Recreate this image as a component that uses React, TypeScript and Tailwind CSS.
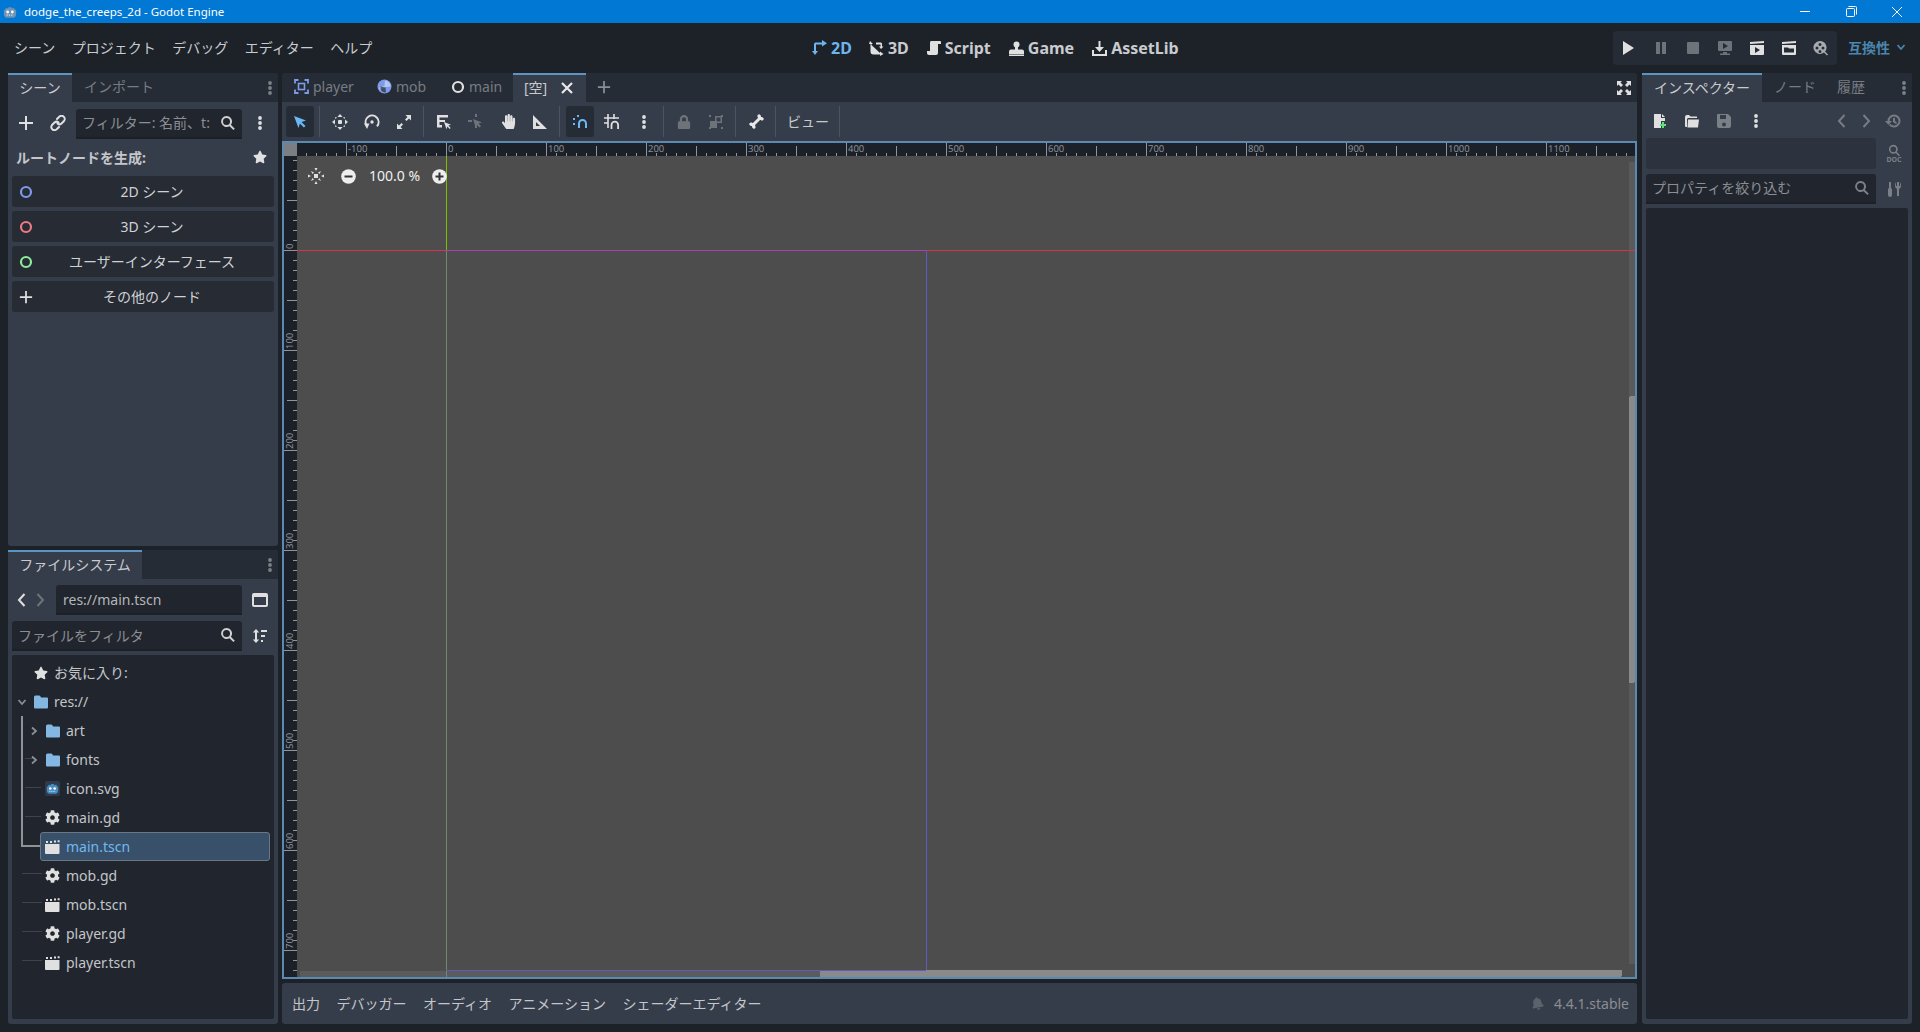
import React from "react";
import { FaCog, FaStar, FaHandPaper, FaLock, FaBone, FaBell } from "react-icons/fa";

type P = { c?: string; s?: number };
const Svg = ({ c = "#e0e0e0", s = 16, children }: P & { children: React.ReactNode }) => (
  <svg viewBox="0 0 16 16" width={s} height={s} fill={c} className="shrink-0">{children}</svg>
);
const Plus = ({ c = "#e0e0e0", s = 16 }: P) => <Svg c={c} s={s}><path d="M7 1h2v6h6v2H9v6H7V9H1V7h6z" /></Svg>;
const Dots = ({ c = "#e0e0e0" }: P) => <Svg c={c}><circle cx="8" cy="3" r="1.9" /><circle cx="8" cy="8" r="1.9" /><circle cx="8" cy="13" r="1.9" /></Svg>;
const Search = ({ c = "#e0e0e0", s = 16 }: P) => <Svg c={c} s={s}><path fillRule="evenodd" d="M6.5 1a5.5 5.5 0 0 1 4.4 8.8l3.9 3.9-1.4 1.4-3.9-3.9A5.5 5.5 0 1 1 6.5 1zm0 2a3.5 3.5 0 1 0 0 7 3.5 3.5 0 0 0 0-7z" /></Svg>;
const Link = () => <Svg><g fill="none" stroke="#e0e0e0" strokeWidth="2" strokeLinecap="round"><path d="M7 4l2-2a3 3 0 0 1 5 4l-2.5 2.5a3 3 0 0 1-4 0" /><path d="M9 12l-2 2a3 3 0 0 1-5-4l2.5-2.5a3 3 0 0 1 4 0" /></g></Svg>;
const Ring = ({ c, s = 14 }: { c: string; s?: number }) => <svg width={s} height={s} viewBox="0 0 14 14" className="shrink-0"><circle cx="7" cy="7" r="5" fill="none" stroke={c} strokeWidth="2.2" /></svg>;
const Folder = ({ s = 14 }: P) => <svg width={s} height={s} viewBox="0 0 14 13" className="shrink-0"><path fill="#84b8e3" d="M0 1.5Q0 0 1.5 0H5q1 0 1.5 1L7 2h6q1 0 1 1v9q0 1-1 1H1q-1 0-1-1z" /></svg>;
const Scene = ({ c = "#e0e0e0" }: P) => <svg width="15" height="14" viewBox="0 0 15 14" fill={c} className="shrink-0"><path d="M0 4h14.5v9a1 1 0 0 1-1 1H1a1 1 0 0 1-1-1z" /><path d="M1 1h2v2H1zM5 1h2v2H5zM9 .6h2v2H9zM12.6.3h2v2h-2z" /></svg>;
const Gear = () => <FaCog size={15} color="#e0e0e0" className="shrink-0" />;
const ChevR = ({ c = "#e0e0e0", s = 16 }: P) => <Svg c="none" s={s}><path d="M5.5 2l5.5 6-5.5 6" stroke={c} strokeWidth="2" fill="none" /></Svg>;
const ChevL = ({ c = "#e0e0e0", s = 16 }: P) => <Svg c="none" s={s}><path d="M10.5 2L5 8l5.5 6" stroke={c} strokeWidth="2" fill="none" /></Svg>;
const ChevD = ({ c = "#8a8f96" }: P) => <svg width="10" height="10" viewBox="0 0 10 10"><path d="M1.5 3L5 7l3.5-4" stroke={c} strokeWidth="1.8" fill="none" /></svg>;
const Cursor = () => <Svg c="#6cb8f5"><path d="M2 2l12 4.5-4.5 1.5 4 4-1.6 1.6-4-4L6.5 14z" /></Svg>;
const Move = () => <Svg><path d="M8 0l2.6 3H5.4zM8 16l-2.6-3h5.2zM0 8l3-2.6v5.2zM16 8l-3 2.6V5.4z" /><rect x="6" y="6" width="4" height="4" rx="1" /><path d="M3 3l2 .5L3.5 5zM13 3l-.5 2L11 3.5zM3 13l.5-2L5 12.5zM13 13l-2-.5 1.5-1.5z" /></Svg>;
const Rotate = () => <Svg><circle cx="8" cy="8" r="1.7" /><path d="M2.4 11.2A6.5 6.5 0 1 1 13 12.3" fill="none" stroke="#e0e0e0" strokeWidth="2" /><path d="M0 9.5h5.5L3 15z" /></Svg>;
const Scale = () => <Svg><path d="M9.5 1H15v5.5l-2-2-2.5 2.5-1.5-1.5L11.5 3zM6.5 15H1V9.5l2 2 2.5-2.5L7 10.5 4.500 13z" /></Svg>;
const ListSel = () => <Svg><path d="M1 1h11v2.500H3.500V6H9v2H3.500v3H6v2.500H1z" /><path d="M8 8l7 2.700-2.600.900 2.300 2.300-1 1-2.300-2.300-.9 2.600z" /></Svg>;
const Pivot = () => <Svg c="#6e737a"><path d="M7 0h2v3H7zM0 6h4v2H0zM7 10h2v4H7zM5 5l9 3.500-3.500 1 2.500 2.500-1.500 1.500-2.500-2.500-1 3.500z" /></Svg>;
const Ruler = () => <Svg><path fillRule="evenodd" d="M1 1l14 14H1zM4 8v4h4z" /></Svg>;
const Magnet = () => <Svg c="none"><path d="M7 14V9.500a3.500 3.500 0 0 1 7 0V14" stroke="#6cb8f5" strokeWidth="2" fill="none" /><path d="M1 4h2v2H1zM5 1h2v2H5zM1 9h2v2H1z" fill="#6cb8f5" /></Svg>;
const GridSnap = () => <Svg c="none"><path d="M4 0v14M10 0v5M0 4h15M0 9h4" stroke="#e0e0e0" strokeWidth="1.600" fill="none" /><path d="M7.500 15v-4a3.300 3.300 0 0 1 6.600 0v4" stroke="#e0e0e0" strokeWidth="1.800" fill="none" /></Svg>;
const Group = () => <Svg c="#6e737a"><rect x="1" y="1" width="2" height="2" /><rect x="13" y="13" width="2" height="2" /><rect x="1" y="13" width="2" height="2" /><rect x="13" y="1" width="2" height="2" /><rect x="2" y="7" width="7" height="7" /><path fillRule="evenodd" d="M7 2h7v7H7zm1.500 1.500v4h4v-4z" /></Svg>;
const Fit = () => <Svg><rect x="6" y="6" width="4" height="4" /><path d="M3 3l3 1.500L4.500 6zM13 3l-1.500 3L10 4.500zM3 13l1.500-3L6 11.500zM13 13l-3-1.500 1.500-1.500z" /><path d="M0 6.500L3 8 0 9.500zM16 6.500L13 8l3 1.500zM6.500 0L8 3l1.500-3zM6.500 16L8 13l1.500 3z" /></Svg>;
const Zoom = ({ plus }: { plus?: boolean }) => <svg width="15" height="15" viewBox="0 0 15 15" className="shrink-0"><circle cx="7.500" cy="7.500" r="7.300" fill="#eeeeee" /><path d={plus ? "M3.500 6.500h3v-3h2v3h3v2h-3v3h-2v-3h-3z" : "M3.500 6.500h8v2h-8z"} fill="#333" /></svg>;
const Full = () => <Svg><path d="M1 1h5L4.500 2.500 7 5 5 7 2.500 4.500 1 6zM15 1v5l-1.500-1.500L11 7 9 5l2.500-2.500L10 1zM1 15v-5l1.500 1.500L5 9l2 2-2.500 2.500L6 15zM15 15h-5l1.500-1.500L9 11l2-2 2.500 2.500L15 10z" /></Svg>;
const Mob = () => <svg width="15" height="15" viewBox="0 0 15 15" className="shrink-0"><circle cx="7.500" cy="7.500" r="7" fill="#7d9be8" /><path d="M8 1.500a6 6 0 0 1 5.500 6L8.500 8 3 11.500a6 6 0 0 1-1-3L7.500 7z" fill="#c7d5f5" opacity=".75" /><path d="M3.500 7.500l5 1 .5 5a6 6 0 0 1-5.500-3z" fill="#262c35" opacity=".7" /></svg>;
const Frame = () => <svg width="15" height="15" viewBox="0 0 15 15" fill="none" className="shrink-0"><path d="M1 4.500V1h3.500M10.500 1H14v3.500M14 10.500V14h-3.500M4.500 14H1v-3.500" stroke="#7d9be8" strokeWidth="1.800" /><rect x="4.500" y="4.500" width="6" height="6" stroke="#7d9be8" strokeWidth="1.600" /></svg>;
const Close = ({ c = "#e8e8e8", w = 2.2 }: { c?: string; w?: number }) => <svg width="14" height="14" viewBox="0 0 14 14"><path d="M2 2l10 10M12 2L2 12" stroke={c} strokeWidth={w} /></svg>;
const GodotLogo = ({ s = 14, c = "#6e93b5" }: P) => <svg width={s} height={s} viewBox="0 0 16 16" className="shrink-0"><path fill={c} d="M1 6l1.500-1 1-2 2 1 1-1.500h3L10.500 4l2-1 1 2L15 6v5q-.500 3-3 3.500H4Q1.500 14 1 11z" /><circle cx="5.300" cy="8" r="1.600" fill="#fff" /><circle cx="10.700" cy="8" r="1.600" fill="#fff" /><path d="M4 11.500h8" stroke="#fff" strokeDasharray="1.400 1.200" /></svg>;
const ReqIcon = () => <svg width="16" height="16" viewBox="0 0 16 16" className="shrink-0"><path fill="#e0e0e0" d="M2 1h7v4h4v3H9v7H2zM10 1l3 3h-3z" /><path fill="#5ee27a" d="M10 9h2v2h2v2h-2v2h-2v-2H8v-2h2z" /></svg>;
const FolderOpen = () => <Svg><path fillRule="evenodd" d="M1 4q0-2 2-2h2l1.500 1.500H13v1.500H4L3 6v8H2q-1 0-1-1zM4 6.500h11l-1 8H3.500z" /></Svg>;
const Save = ({ c }: { c: string }) => <Svg c={c}><path fillRule="evenodd" d="M2 1h10l3 3v9q0 2-2 2H3q-2 0-2-2V2q0-1 1-1zm2 1v4h6V2zm4 7.500a2 2 0 1 0 0 4 2 2 0 0 0 0-4z" /></Svg>;
const History = ({ c }: { c: string }) => <Svg c={c}><path d="M9 1.500a6.500 6.500 0 1 1-5 10.700l1.500-1.300A4.500 4.500 0 1 0 4.500 8H7L3.500 12 0 8h2.500A6.500 6.500 0 0 1 9 1.500zM8 5h2v3l2 1.500-1 1.500-3-2z" /></Svg>;
const Tools = ({ c }: { c: string }) => <Svg c={c}><path d="M3 1h2v6l1 1v6a2 2 0 0 1-4 0V8l1-1zM10 1v4h1V1h1v0h1v4h1V1q1 1 1 4 0 2-2 3v7h-2V8q-2-1-2-3 0-3 1-4z" /></Svg>;

const Slot = ({ on, children }: { on?: boolean; children: React.ReactNode }) => (
  <div className={`w-[28px] h-[31px] flex items-center justify-center rounded-[3px] shrink-0 ${on ? "bg-[#262c35]" : ""}`}>{children}</div>
);
const Sep = () => <div className="w-px h-[31px] bg-[#4d5461] ml-px mr-[2px] shrink-0" />;

const Field = ({ className, text, dim, search, sc }: { className: string; text?: string; dim?: boolean; search?: boolean; sc?: string }) => (
  <div className={`h-[30px] bg-[#21262e] border-b-2 border-[#1d2127] rounded-t-[3px] flex items-center justify-between pl-[6px] pr-[6px] ${className}`}>
    <span className={`text-[14px] whitespace-nowrap overflow-hidden ${dim ? "text-[#8b8e93]" : "text-[#b4b6ba]"}`}>{text}</span>
    {search && <div className="ml-1 shrink-0"><Search c={sc ?? "#d4d4d4"} /></div>}
  </div>
);

const PanelTabs = ({ active, width, rest, gap }: { active: string; width: number; rest: string[]; gap?: string }) => (
  <div className="h-[29px] flex items-stretch bg-[#262c35] rounded-t-[3px] shrink-0">
    <div style={{ width }} className="bg-[#363d4a] border-t-2 border-[#5c95c4] flex items-center justify-center text-[14px] text-[#c8cace] shrink-0 pb-[3px]">{active}</div>
    {rest.map((r, i) => (
      <div key={r} className={`flex items-center text-[14px] text-[#777c84] pb-[2px] ${i > 0 ? "ml-[21px]" : (gap ?? "pl-[12px]")}`}>{r}</div>
    ))}
    <div className="ml-auto w-[16px] flex items-center justify-center"><Dots c="#7d8288" /></div>
  </div>
);

const CreateBtn = ({ icon, label }: { icon: React.ReactNode; label: string }) => (
  <div className="h-[31px] bg-[#262b34] rounded-[3px] flex items-center relative shrink-0">
    <div className="w-[30px] pl-[7px] flex items-center">{icon}</div>
    <span className="flex-1 text-center text-[14px] text-[#cfd1d4] pr-[12px] pb-[1px]">{label}</span>
  </div>
);

type Row = { icon: React.ReactNode; label: string; indent: number; chev?: "r" | "d"; sel?: boolean; };
const rows: Row[] = [
  { icon: <FaStar size={14} color="#e0e0e0" className="shrink-0" />, label: "お気に入り:", indent: 21 },
  { icon: <Folder />, label: "res://", indent: 21, chev: "d" },
  { icon: <Folder />, label: "art", indent: 33, chev: "r" },
  { icon: <Folder />, label: "fonts", indent: 33, chev: "r" },
  { icon: <div className="w-[15px] h-[15px] bg-[#2f3a4f] rounded-[2px] flex items-center justify-center shrink-0"><GodotLogo s={13} c="#478cbf" /></div>, label: "icon.svg", indent: 33 },
  { icon: <Gear />, label: "main.gd", indent: 33 },
  { icon: <Scene />, label: "main.tscn", indent: 33, sel: true },
  { icon: <Gear />, label: "mob.gd", indent: 33 },
  { icon: <Scene />, label: "mob.tscn", indent: 33 },
  { icon: <Gear />, label: "player.gd", indent: 33 },
  { icon: <Scene />, label: "player.tscn", indent: 33 },
];

const Tree = () => (
  <div className="relative flex-1 bg-[#21262e] rounded-[2px] pt-[3px] pr-[4px]">
    <svg className="absolute left-0 top-0 pointer-events-none" width="40" height="320" shapeRendering="crispEdges">
      <path d="M9 61h2v129h19v2H9z" fill="#8f9296" />
      <path d="M9 193h1v113h20v-1H10v-28h20v-1H10v-28h20v-1H10v-28h20v-1H10V193z" fill="#3f444c" />
      <path d="M13 103h11v1H13zM13 132h16v1H13zM13 161h16v1H13z" fill="#3f444c" />
    </svg>
    {rows.map((r) => (
      <div key={r.label} className="h-[29px] flex items-center relative">
        {r.chev && (
          <div className={`absolute top-[10px] ${r.indent === 21 ? "left-[5px]" : "left-[17px]"}`}>
            {r.chev === "d" ? <ChevD /> : <div className="-rotate-90"><ChevD /></div>}
          </div>
        )}
        {r.sel ? (
          <div className="ml-[28px] flex-1 h-[29px] bg-[#38506a] border border-[#6c7785] rounded-[3px] flex items-center pl-[4px] gap-[6px]">
            {r.icon}
            <span className="text-[14px] text-[#70b8f2]">{r.label}</span>
          </div>
        ) : (
          <div style={{ marginLeft: r.indent }} className="flex items-center gap-[6px]">
            <div className="w-[15px] flex justify-center">{r.icon}</div>
            <span className="text-[14px] text-[#c3c5c9]">{r.label}</span>
          </div>
        )}
      </div>
    ))}
  </div>
);

const hTicks: number[] = [];
for (let x = -140; x <= 1189; x += 10) hTicks.push(x);
const vTicks: number[] = [];
for (let y = -90; y <= 720; y += 10) vTicks.push(y);

const RulerTop = () => (
  <svg width="1338" height="13" className="block shrink-0" shapeRendering="crispEdges">
    {hTicks.map((t) => {
      const x = t + 149;
      const h = t % 100 === 0 ? 13 : t % 50 === 0 ? 10 : 3;
      return <rect key={t} x={x} y={13 - h} width="1" height={h} fill="#8f949b" />;
    })}
    {hTicks.filter((t) => t % 100 === 0).map((t) => (
      <text key={t} x={t + 151} y="9" fontSize="9.5" fill="#8b9097" fontFamily="Noto Sans" textRendering="geometricPrecision">{t}</text>
    ))}
  </svg>
);
const RulerLeft = () => (
  <svg width="13" height="821" className="block shrink-0" shapeRendering="crispEdges">
    {vTicks.map((t) => {
      const y = t + 94;
      const w = t % 100 === 0 ? 13 : t % 50 === 0 ? 10 : 4;
      return <rect key={t} x={13 - w} y={y} width={w} height="1" fill="#8f949b" />;
    })}
    {vTicks.filter((t) => t % 100 === 0 && t >= 0).map((t) => (
      <text key={t} transform={`translate(9 ${t + 93}) rotate(-90)`} fontSize="9.5" fill="#8b9097" fontFamily="Noto Sans">{t}</text>
    ))}
  </svg>
);

const Canvas = () => (
  <div className="relative flex-1 bg-[#4d4d4d] overflow-hidden">
    <svg className="absolute inset-0" width="1338" height="821" shapeRendering="crispEdges">
      <rect x="3" y="815" width="1322" height="6" fill="#5b5b5b" />
      <rect x="523" y="814" width="802" height="7" rx="2" fill="#8a8a8a" />
      <rect x="1332" y="6" width="6" height="802" fill="#5a5a5a" />
      <rect x="1332" y="240" width="6" height="287" rx="2" fill="#8a8a8a" />
      <rect x="149" y="94" width="1" height="727" fill="#6f8a6f" />
      <rect x="149" y="0" width="1" height="94" fill="#7fbf00" />
      <rect x="0" y="94" width="149" height="1" fill="#d8324c" />
      <rect x="149" y="94" width="480" height="1" fill="#a544b0" />
      <rect x="629" y="94" width="709" height="1" fill="#d8324c" />
      <rect x="629" y="95" width="1" height="719" fill="#5a5cc0" />
      <rect x="149" y="814" width="480" height="1" fill="#5a5cc0" />
    </svg>
    <div className="absolute left-[11px] top-[12px] flex items-center h-[16px]">
      <Fit />
      <div className="ml-[17px]"><Zoom /></div>
      <span className="ml-[13px] w-[63px] text-[14px] text-[#f0f0f0] pb-[1px]">100.0 %</span>
      <Zoom plus />
    </div>
  </div>
);

const tabs = [
  { icon: <Frame />, label: "player", w: 83 },
  { icon: <Mob />, label: "mob", w: 74 },
  { icon: <Ring c="#e0e0e0" s={14} />, label: "main", w: 63 },
];

export default function App() {
  return (
    <div className="w-[1920px] h-[1032px] overflow-hidden flex flex-col bg-[#1d2229] font-['Noto_Sans','Noto_Sans_CJK_JP',sans-serif]">
      {/* title bar */}
      <div className="h-[23px] bg-[#0078d4] flex items-center shrink-0 pl-[3px] text-white">
        <GodotLogo />
        <span className="ml-[7px] text-[11.5px]">dodge_the_creeps_2d - Godot Engine</span>
        <div className="ml-auto flex items-center">
          <div className="w-[46px] flex justify-center"><div className="w-[10px] h-px bg-white" /></div>
          <div className="w-[46px] flex justify-center">
            <svg width="11" height="11" viewBox="0 0 11 11" fill="none" stroke="#fff"><rect x=".5" y="2.500" width="8" height="8" rx="1" /><path d="M2.500 .5h7a1 1 0 0 1 1 1v7" /></svg>
          </div>
          <div className="w-[46px] flex justify-center"><Close c="#fff" w={1} /></div>
        </div>
      </div>

      {/* menu bar */}
      <div className="h-[50px] relative flex items-center shrink-0 pl-[14px] text-[14px] text-[#c9cbcf]">
        <div className="flex gap-[16.5px] pb-[2px]">
          {["シーン", "プロジェクト", "デバッグ", "エディター", "ヘルプ"].map((m) => <span key={m}>{m}</span>)}
        </div>
        <div className="absolute left-[812px] top-0 h-[50px] flex items-center text-[16px] font-bold">
          <div className="flex items-center gap-[4px] text-[#6cb5f0]">
            <svg width="15" height="16" viewBox="0 0 15 16" fill="#6cb5f0"><path d="M3 15L0 11h2V4q0-1.500 1.500-1.500H10V0l5 3.300-5 3.200V4.500H4V11h2z" /></svg>
            <span>2D</span>
          </div>
          <div className="flex items-center gap-[4px] ml-[17px] text-[#c9cbcf]">
            <svg width="15" height="15" viewBox="0 0 15 15" fill="#e0e0e0"><path d="M1 0l3 3H2.500v1L11 12v-1.500l3.500 2.500-3.500 2v-1.500H4.500q-3 0-3-3V3H0z" /><path d="M7 1.500h5l1 1v3l1.500 0-2.500 2.500L10 5.500h1.500V3.500H7z" /></svg>
            <span>3D</span>
          </div>
          <div className="flex items-center gap-[4px] ml-[18px] text-[#c9cbcf]">
            <svg width="14" height="16" viewBox="0 0 14 16" fill="#e0e0e0"><path d="M4 1h9q1 0 1 1v2h-3v9q0 2-2 2H2q-2 0-2-2v-2h3V3q0-2 1-2z" /></svg>
            <span>Script</span>
          </div>
          <div className="flex items-center gap-[4px] ml-[18px] text-[#c9cbcf]">
            <svg width="15" height="15" viewBox="0 0 15 15" fill="#e0e0e0"><circle cx="7.500" cy="3.500" r="3" /><path d="M6 5h3v3.500h4q2 0 2 2V13H0v-2.500q0-2 2-2h4z" /><rect y="13.500" width="15" height="1.500" /></svg>
            <span>Game</span>
          </div>
          <div className="flex items-center gap-[4px] ml-[18px] text-[#c9cbcf]">
            <svg width="15" height="15" viewBox="0 0 15 15" fill="#e0e0e0"><path d="M6.500 0h2v6H12L7.500 11 3 6h3.500zM0 9h2v4h11V9h2v6H0z" /></svg>
            <span>AssetLib</span>
          </div>
        </div>
        <div className="absolute left-[1613px] top-[8px] w-[224px] h-[34px] bg-[#262c35] rounded-[4px] flex items-center">
          <div className="w-[32.3px] flex justify-center -ml-px mr-px"><Svg><path d="M3 1l11 7-11 7z" /></Svg></div>
          <div className="w-[32.3px] flex justify-center"><Svg c="#6e737a"><path d="M3 2h4v12H3zM9 2h4v12H9z" /></Svg></div>
          <div className="w-[32.3px] flex justify-center"><Svg c="#6e737a"><rect x="2" y="2" width="12" height="12" rx="1" /></Svg></div>
          <div className="w-[32.3px] flex justify-center"><Svg c="#6e737a"><path fillRule="evenodd" d="M2 1h12q1 0 1 1v8q0 1-1 1H2q-1 0-1-1V2q0-1 1-1zm4 2v6l5-3z" /><path d="M6 12h4v1.500h3V15H3v-1.500h3z" /></Svg></div>
          <div className="w-[32.3px] flex justify-center"><Svg><path d="M1 2l14-1v2L1 4z" /><path fillRule="evenodd" d="M1 5h14v9q0 1-1 1H2q-1 0-1-1zm5 2v6l5-3z" /></Svg></div>
          <div className="w-[32.3px] flex justify-center"><Svg><path d="M1 2l14-1v2L1 4z" /><path fillRule="evenodd" d="M1 5h14v9q0 1-1 1H2q-1 0-1-1zm2 2.500v5h10v-4H8l-1-1z" /></Svg></div>
          <div className="w-[32.3px] flex justify-center"><Svg c="#a8acb1"><path fillRule="evenodd" d="M7 1a6.500 6.500 0 0 1 5 10.600l3 3-1 1-3-3A6.500 6.500 0 1 1 7 1zM7 3a1.500 1.500 0 1 0 0 3 1.500 1.500 0 0 0 0-3zM4 6.500a1.500 1.500 0 1 0 0 3 1.500 1.500 0 0 0 0-3zm6 0a1.500 1.500 0 1 0 0 3 1.500 1.500 0 0 0 0-3zM7 10a1.500 1.500 0 1 0 0 3 1.500 1.500 0 0 0 0-3z" /></Svg></div>
        </div>
        <div className="absolute left-[1848px] top-0 h-[48px] flex items-center gap-[6px] text-[14px] font-bold text-[#4a86ad]">
          <span>互換性</span><ChevD c="#4a86ad" />
        </div>
      </div>

      {/* main */}
      <div className="flex-1 flex pl-[8px] pb-[8px] min-h-0">
        {/* left dock */}
        <div className="w-[270px] flex flex-col gap-[4px] shrink-0">
          <div className="h-[473px] bg-[#363d4a] rounded-[3px] flex flex-col">
            <PanelTabs active="シーン" width={64} rest={["インポート"]} />
            <div className="h-[36px] flex items-center shrink-0 pt-[6px]">
              <div className="w-[36px] flex justify-center"><Plus /></div>
              <div className="w-[30px] flex justify-center -translate-x-px"><Link /></div>
              <div className="ml-[2px] pt-[1px]"><Field className="w-[166px]" text="フィルター: 名前、t:" dim search sc="#d0d0d0" /></div>
              <div className="w-[36px] flex justify-center"><Dots /></div>
            </div>
            <div className="h-[34px] flex items-center justify-between px-[8px] pt-[5px] pb-[1px] shrink-0">
              <span className="text-[14px] font-bold text-[#c4c6ca]">ルートノードを生成:</span>
              <FaStar size={14} color="#e0e0e0" className="mr-[3px]" />
            </div>
            <div className="flex flex-col gap-[4px] px-[4px] pt-[4px]">
              <CreateBtn icon={<Ring c="#7d9be8" />} label="2D シーン" />
              <CreateBtn icon={<Ring c="#ec7a84" />} label="3D シーン" />
              <CreateBtn icon={<Ring c="#8eeb9c" />} label="ユーザーインターフェース" />
              <CreateBtn icon={<Plus s={14} />} label="その他のノード" />
            </div>
          </div>
          <div className="flex-1 bg-[#363d4a] rounded-[3px] flex flex-col pb-[5px] min-h-0">
            <PanelTabs active="ファイルシステム" width={134} rest={[]} />
            <div className="h-[38px] flex items-center shrink-0 pt-[5px] pb-[1px]">
              <div className="w-[22px] flex justify-end"><ChevL /></div>
              <div className="w-[20px] flex justify-center"><ChevR c="#6e737a" /></div>
              <Field className="w-[186px] ml-[6px] !pl-[7px]" text="res://main.tscn" />
              <div className="w-[36px] flex justify-center"><svg width="16" height="16" viewBox="0 0 16 16" fill="none"><rect x="1" y="2" width="14" height="12" rx="1" stroke="#e0e0e0" strokeWidth="2" /><rect x="1" y="2" width="14" height="3" fill="#e0e0e0" /></svg></div>
            </div>
            <div className="h-[34px] flex items-center shrink-0 pl-[4px] pt-[4px]">
              <Field className="w-[230px]" text="ファイルをフィルタ" dim search sc="#d0d0d0" />
              <div className="w-[36px] flex justify-center">
                <Svg><path d="M4 1l3.200 3.500H5v7h2.200L4 15 .800 11.500H3v-7H.800zM9 2h6v2H9zM9 7h4v2H9zM9 12h2v2H9z" /></Svg>
              </div>
            </div>
            <div className="flex-1 flex px-[4px] pt-[4px] min-h-0"><Tree /></div>
          </div>
        </div>

        {/* center */}
        <div className="w-[1355px] ml-[4px] flex flex-col gap-[4px] shrink-0">
          <div className="flex-1 flex flex-col min-h-0">
            <div className="h-[29px] bg-[#262c35] rounded-t-[3px] flex items-stretch shrink-0 pl-[12px]">
              {tabs.map((t) => (
                <div key={t.label} style={{ width: t.w }} className="flex items-center gap-[4px] text-[14px] text-[#777c84] pb-[2px] shrink-0">
                  {t.icon}<span>{t.label}</span>
                </div>
              ))}
              <div className="w-[73px] ml-[-1px] bg-[#363d4a] border-t-2 border-[#5c95c4] flex items-center pl-[11px] text-[14px] text-[#c8cace] shrink-0 pb-[1px]">
                <span className="w-[36px] pb-[1px]">[空]</span><Close />
              </div>
              <div className="ml-[11px] flex items-center pb-[2px]"><Plus c="#8a8f96" s={14} /></div>
              <div className="ml-auto flex items-center pr-[5px]"><Full /></div>
            </div>
            <div className="h-[39px] bg-[#363d4a] flex items-center gap-[4px] pl-[4px] shrink-0">
              <Slot on><Cursor /></Slot><Sep />
              <Slot><Move /></Slot><Slot><Rotate /></Slot><Slot><Scale /></Slot><Sep />
              <Slot><ListSel /></Slot><Slot><Pivot /></Slot><Slot><FaHandPaper size={15} color="#e0e0e0" /></Slot><Slot><Ruler /></Slot><Sep />
              <Slot on><Magnet /></Slot><Slot><GridSnap /></Slot><Slot><Dots /></Slot><Sep />
              <Slot><FaLock size={14} color="#6e737a" /></Slot><Slot><Group /></Slot><Sep />
              <Slot><FaBone size={15} color="#e8e8e8" className="-rotate-45" /></Slot><Sep />
              <div className="w-[52px] text-center text-[14px] text-[#c8cace] pb-[1px]">ビュー</div><Sep />
            </div>
            <div className="flex-1 flex flex-col border-2 border-[#5a8ab2] bg-[#1c2129] min-h-0">
              <div className="flex shrink-0">
                <div className="w-[13px] h-[13px] bg-[#7b7e82] shrink-0" />
                <RulerTop />
              </div>
              <div className="flex-1 flex min-h-0">
                <RulerLeft />
                <Canvas />
              </div>
            </div>
          </div>
          <div className="h-[41px] bg-[#363d4a] rounded-[3px] flex items-center pl-[10px] pr-[8px] shrink-0 text-[14px] text-[#c4c6ca]">
            <div className="flex gap-[16.5px]">
              {["出力", "デバッガー", "オーディオ", "アニメーション", "シェーダーエディター"].map((b) => <span key={b}>{b}</span>)}
            </div>
            <div className="ml-auto flex items-center gap-[10px] text-[#8a8e94]">
              <FaBell size={13} color="#5c626b" className="-rotate-12" />
              <span>4.4.1.stable</span>
            </div>
          </div>
        </div>

        {/* right dock */}
        <div className="w-[270px] ml-[5px] bg-[#363d4a] rounded-[3px] flex flex-col pb-[5px] shrink-0">
          <PanelTabs active="インスペクター" width={120} rest={["ノード", "履歴"]} gap="pl-[12px]" />
          <div className="h-[36px] flex items-center shrink-0 relative pl-[2px] pt-[1px]">
            <div className="w-[32px] flex justify-center"><ReqIcon /></div>
            <div className="w-[32px] flex justify-center"><FolderOpen /></div>
            <div className="w-[32px] flex justify-center"><Save c="#7b8087" /></div>
            <div className="w-[32px] flex justify-center"><Dots /></div>
            <div className="ml-[58px] w-[24px] flex justify-center"><ChevL c="#777c84" /></div>
            <div className="w-[24px] flex justify-center"><ChevR c="#777c84" /></div>
            <div className="-ml-[1px] w-[32px] flex justify-center"><History c="#777c84" /></div>
          </div>
          <div className="h-[31px] flex items-center shrink-0 pl-[4px]">
            <div className="w-[230px] h-[31px] bg-[#2d333e] rounded-[3px]" />
            <div className="w-[36px] flex flex-col items-center leading-none">
              <Search c="#7b8087" s={13} />
              <span className="text-[7px] font-bold text-[#7b8087] -mt-[1px]">DOC</span>
            </div>
          </div>
          <div className="h-[35px] flex items-center shrink-0 pl-[4px] pt-[4px]">
            <Field className="w-[230px]" text="プロパティを絞り込む" dim search sc="#7b8087" />
            <div className="w-[36px] flex justify-center"><Tools c="#7b8087" /></div>
          </div>
          <div className="flex-1 mx-[4px] mt-[4px] bg-[#21262e] rounded-[2px]" />
        </div>
      </div>
    </div>
  );
}
